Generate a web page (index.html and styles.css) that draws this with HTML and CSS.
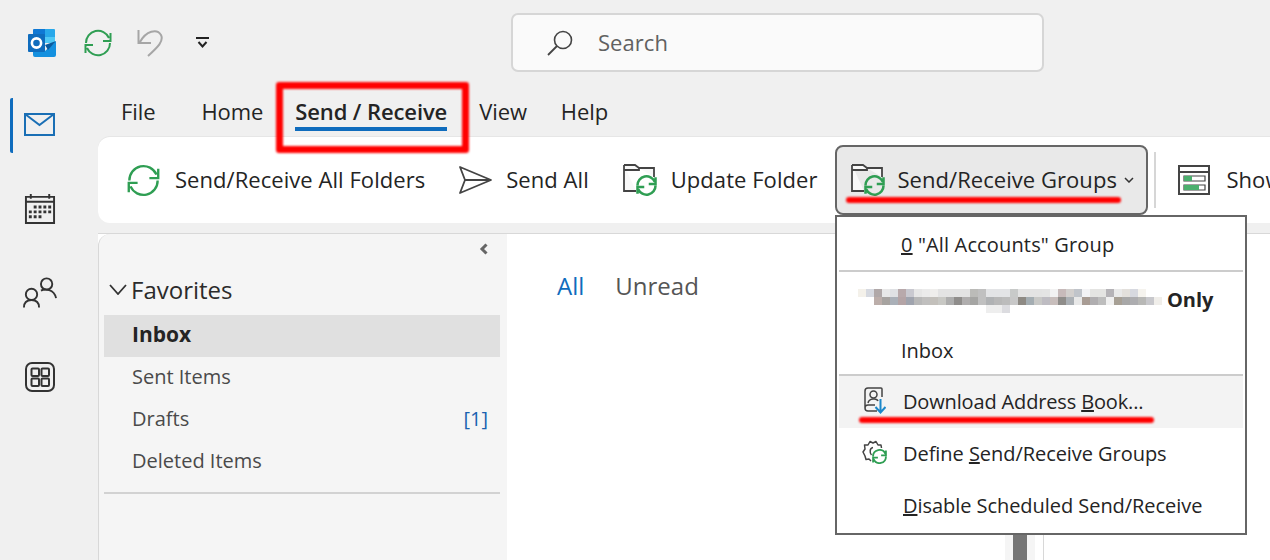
FILE: index.html
```html
<!DOCTYPE html>
<html lang="en">
<head>
  <meta charset="UTF-8" />
  <title>Outlook - Send / Receive</title>
  <link rel="stylesheet" href="styles.css">
</head>
<body>

  <svg class="defs" width="0" height="0">
    <symbol id="sync" viewBox="0 0 28 28">
      <path d="M2 14A12 12 0 0 1 25 9M26.500 4V12H19M26 14A12 12 0 0 1 3 19M1.500 24V16H9" fill="none" stroke="currentColor" stroke-width="2"/>
    </symbol>
    <symbol id="sync-bold" viewBox="0 0 28 28">
      <path d="M2 14A12 12 0 0 1 25 9M26 3V12H17M26 14A12 12 0 0 1 3 19M2 25V16H11" fill="none" stroke="currentColor" stroke-width="3.400"/>
    </symbol>
    <symbol id="folder" viewBox="0 0 32 28">
      <path d="M1 1H12L16 4V6H1V27H13M1 1V6M16 4H31V13" fill="#f8f8f8" stroke="currentColor" stroke-width="1.800"/>
    </symbol>
  </svg>

  <header class="titlebar">
    <div class="quick">
      <svg class="logo" width="28" height="28" viewBox="0 0 28 28">
        <path d="M6 0H17V8H5V1Q5 0 6 0Z" fill="#0f78d4"/>
        <path d="M17 0H26Q27 0 27 1V8H17Z" fill="#28a8ea"/>
        <path d="M5 8H17V16H5Z" fill="#0c6bbd"/>
        <path d="M17 8H27V14H17Z" fill="#50c8f5"/>
        <path d="M5 16L17 22L28 12V26Q28 28 26 28H7Q5 28 5 26Z" fill="#1490df"/>
        <path d="M17 16L28 12L20 21Z" fill="#0a5a9e"/>
        <rect x="0" y="5" width="17" height="18" rx="1" fill="#0f6cbd"/>
        <circle cx="8.500" cy="14" r="4.600" fill="none" stroke="#fff" stroke-width="2.600"/>
      </svg>
      <svg class="qa-sync"><use href="#sync"/></svg>
      <svg class="qa-undo" width="28" height="28" viewBox="0 0 28 28">
        <path d="M1.500 1V14H14M3 13C9 2 20 -1 24 6C27 12 21 18 11 27" fill="none" stroke="#a6a6a6" stroke-width="2"/>
      </svg>
      <svg class="qa-more" width="16" height="12" viewBox="0 0 16 12">
        <path d="M1 1H14M3.500 5L7.500 9.500L11.500 5" fill="none" stroke="#222" stroke-width="2"/>
      </svg>
    </div>
    <div class="search">
      <svg width="28" height="28" viewBox="0 0 28 28">
        <circle cx="16" cy="11" r="8.500" fill="none" stroke="#444" stroke-width="1.600"/>
        <path d="M10 17L1 26" fill="none" stroke="#444" stroke-width="1.800"/>
      </svg>
      <span>Search</span>
    </div>
  </header>

  <div class="app">
    <nav class="rail">
      <div class="rail-item active">
        <svg width="31" height="23" viewBox="0 0 31 23">
          <path d="M1 1H30V22H1ZM1 1L15.500 12L30 1" fill="none" stroke="#1a6fb5" stroke-width="2"/>
        </svg>
      </div>
      <div class="rail-item">
        <svg width="32" height="32" viewBox="0 0 33 33">
          <path d="M2 4H31V31H2ZM2 9H31M7 1V6M26 1V6" fill="none" stroke="#333" stroke-width="2"/>
          <path d="M10 13h3v3h-3zM15 13h3v3h-3zM20 13h3v3h-3zM25 13h3v3h-3zM5 18h3v3H5zM10 18h3v3h-3zM15 18h3v3h-3zM20 18h3v3h-3zM25 18h3v3h-3zM5 23h3v3H5zM10 23h3v3h-3zM15 23h3v3h-3z" fill="#333"/>
        </svg>
      </div>
      <div class="rail-item">
        <svg width="34" height="33" viewBox="0 0 36 34">
          <circle cx="9" cy="19" r="6" fill="none" stroke="#333" stroke-width="2"/>
          <path d="M1 33C1 28 4 25 9 25C14 25 17 28 17 33" fill="none" stroke="#333" stroke-width="2"/>
          <circle cx="25" cy="8" r="6" fill="none" stroke="#333" stroke-width="2"/>
          <path d="M19 15C23 13 33 13 35 23" fill="none" stroke="#333" stroke-width="2"/>
        </svg>
      </div>
      <div class="rail-item">
        <svg width="30" height="30" viewBox="0 0 30 30">
          <rect x="1" y="1" width="28" height="28" rx="6" fill="none" stroke="#333" stroke-width="2"/>
          <rect x="6.500" y="6.500" width="7.500" height="7.500" rx="1" fill="none" stroke="#333" stroke-width="2"/>
          <rect x="16.500" y="6.500" width="7.500" height="7.500" rx="1" fill="none" stroke="#333" stroke-width="2"/>
          <rect x="6.500" y="16.500" width="7.500" height="7.500" rx="1" fill="none" stroke="#333" stroke-width="2"/>
          <rect x="16.500" y="16.500" width="7.500" height="7.500" rx="1" fill="none" stroke="#333" stroke-width="2"/>
        </svg>
      </div>
    </nav>

    <main class="main">
      <div class="tabs">
        <span class="tab tab-file">File</span>
        <span class="tab">Home</span>
        <span class="tab active">Send / Receive</span>
        <span class="tab tab-view">View</span>
        <span class="tab">Help</span>
      </div>

      <div class="ribbon">
        <div class="rb-btn rb-all">
          <svg class="rb-sync"><use href="#sync"/></svg>
          <span>Send/Receive All Folders</span>
        </div>
        <div class="rb-btn rb-send">
          <svg width="33" height="28" viewBox="0 0 33 28">
            <path d="M1 1L32 14L1 27L6 14ZM6 14H32" fill="none" stroke="#444" stroke-width="1.800" stroke-linejoin="round"/>
          </svg>
          <span>Send All</span>
        </div>
        <div class="rb-btn rb-update">
          <span class="folder-icon">
            <svg class="folder-base"><use href="#folder"/></svg>
            <svg class="folder-sync"><use href="#sync-bold"/></svg>
          </span>
          <span>Update Folder</span>
        </div>
        <div class="rb-btn rb-groups">
          <span class="folder-icon">
            <svg class="folder-base"><use href="#folder"/></svg>
            <svg class="folder-sync"><use href="#sync-bold"/></svg>
          </span>
          <span>Send/Receive Groups</span>
          <svg class="caret" width="10" height="6" viewBox="0 0 10 6">
            <path d="M1 1L5 5L9 1" fill="none" stroke="#333" stroke-width="1.500"/>
          </svg>
        </div>
        <div class="rb-sep"></div>
        <div class="rb-btn rb-show">
          <svg width="32" height="30" viewBox="0 0 32 30">
            <path d="M1 1H31V29H1ZM1 7H31" fill="none" stroke="#444" stroke-width="2"/>
            <path d="M6 11H27V16H6ZM6 20H27V25H6Z" fill="#fff" stroke="#444" stroke-width="1.200"/>
            <path d="M6 11H14V16H6ZM6 20H21V25H6Z" fill="#4caf6e"/>
          </svg>
          <span>Show</span>
        </div>
      </div>

      <div class="content">
        <aside class="folders">
          <div class="collapse">
            <svg width="10" height="12" viewBox="0 0 10 12"><path d="M7.500 1.500L3 6L7.500 10.500" fill="none" stroke="#666" stroke-width="3"/></svg>
          </div>
          <div class="fav-head">
            <svg width="18" height="11" viewBox="0 0 18 11"><path d="M1 1L9 10L17 1" fill="none" stroke="#333" stroke-width="1.800"/></svg>
            <span>Favorites</span>
          </div>
          <ul class="fav-list">
            <li class="selected"><span>Inbox</span></li>
            <li><span>Sent Items</span></li>
            <li><span>Drafts</span> <span class="count">[1]</span></li>
            <li><span>Deleted Items</span></li>
          </ul>
          <div class="fav-rule"></div>
        </aside>
        <section class="list">
          <div class="list-body">
            <div class="filters">
              <span class="filter-on">All</span>
              <span>Unread</span>
            </div>
          </div>
          <div class="scroll"><div class="thumb"></div></div>
        </section>
        <section class="reading"></section>
      </div>
    </main>
  </div>

  <!-- dropdown from Send/Receive Groups -->
  <div class="menu">
    <div class="menu-row first"><span><u>0</u> "All Accounts" Group</span></div>
    <div class="menu-rule"></div>
    <div class="menu-group">
      <div class="menu-row account">
        <svg class="blurred" width="312" height="24" viewBox="0 0 312 24" shape-rendering="crispEdges">
          <rect x="0" width="8" height="8" fill="#f4f1ea"/><rect x="8" width="8" height="8" fill="#d6d9e0"/><rect x="16" width="8" height="8" fill="#b0a8a8"/><rect x="24" width="8" height="8" fill="#e8e8e8"/><rect x="32" width="8" height="8" fill="#dfe1e4"/><rect x="40" width="8" height="8" fill="#b8a9ab"/><rect x="48" width="8" height="8" fill="#c9c9d0"/><rect x="56" width="8" height="8" fill="#e6e6e6"/><rect x="64" width="8" height="8" fill="#ebebeb"/><rect x="72" width="8" height="8" fill="#efeeec"/><rect x="80" width="32" height="8" fill="#e3e3e3"/><rect x="112" width="8" height="8" fill="#bbbbb8"/><rect x="120" width="8" height="8" fill="#c0c0c0"/><rect x="128" width="24" height="8" fill="#e3e4e6"/><rect x="152" width="8" height="8" fill="#c8cac9"/><rect x="160" width="24" height="8" fill="#e3e3e3"/><rect x="184" width="8" height="8" fill="#e4e4e4"/><rect x="192" width="8" height="8" fill="#f2f2f2"/><rect x="200" width="8" height="8" fill="#c7baba"/><rect x="208" width="8" height="8" fill="#d2cfcd"/><rect x="216" width="8" height="8" fill="#c0c4ca"/><rect x="224" width="8" height="8" fill="#f3f3f5"/><rect x="232" width="16" height="8" fill="#e4e4e2"/><rect x="248" width="8" height="8" fill="#b5b3b7"/><rect x="256" width="8" height="8" fill="#e9e9e9"/><rect x="264" width="8" height="8" fill="#e3e0dc"/><rect x="272" width="8" height="8" fill="#d7d9e0"/><rect x="280" width="8" height="8" fill="#f5f3ee"/>
          <rect x="16" y="8" width="8" height="8" fill="#bcaeaa"/><rect x="24" y="8" width="8" height="8" fill="#a7a3a0"/><rect x="32" y="8" width="8" height="8" fill="#aab0b8"/><rect x="40" y="8" width="8" height="8" fill="#b4a4a6"/><rect x="48" y="8" width="8" height="8" fill="#a0a4ae"/><rect x="56" y="8" width="8" height="8" fill="#b8b8b8"/><rect x="64" y="8" width="8" height="8" fill="#c0bfbe"/><rect x="72" y="8" width="8" height="8" fill="#c3c0bb"/><rect x="80" y="8" width="8" height="8" fill="#c8c8c4"/><rect x="88" y="8" width="8" height="8" fill="#adadad"/><rect x="96" y="8" width="8" height="8" fill="#8f8d8b"/><rect x="104" y="8" width="8" height="8" fill="#b0aeae"/><rect x="112" y="8" width="8" height="8" fill="#a5a5a3"/><rect x="120" y="8" width="8" height="8" fill="#c0c0c0"/><rect x="128" y="8" width="8" height="8" fill="#b0b2b4"/><rect x="136" y="8" width="8" height="8" fill="#b8b8b8"/><rect x="144" y="8" width="8" height="8" fill="#bcbcbc"/><rect x="152" y="8" width="8" height="8" fill="#c8c8c8"/><rect x="160" y="8" width="8" height="8" fill="#8e8a84"/><rect x="168" y="8" width="8" height="8" fill="#a4adb2"/><rect x="176" y="8" width="8" height="8" fill="#c8c8c6"/><rect x="184" y="8" width="8" height="8" fill="#bebcc2"/><rect x="192" y="8" width="8" height="8" fill="#c8bebc"/><rect x="200" y="8" width="8" height="8" fill="#8f8d8a"/><rect x="208" y="8" width="8" height="8" fill="#abb0b5"/><rect x="216" y="8" width="8" height="8" fill="#e8e8e8"/><rect x="224" y="8" width="8" height="8" fill="#a89c94"/><rect x="232" y="8" width="8" height="8" fill="#b0aeb0"/><rect x="240" y="8" width="8" height="8" fill="#bdbdbd"/><rect x="248" y="8" width="8" height="8" fill="#f0f0f0"/><rect x="256" y="8" width="8" height="8" fill="#a7a095"/><rect x="264" y="8" width="8" height="8" fill="#a8a8a8"/><rect x="272" y="8" width="8" height="8" fill="#adadb0"/><rect x="280" y="8" width="8" height="8" fill="#b8b8b6"/><rect x="288" y="8" width="8" height="8" fill="#c8c8cc"/><rect x="296" y="8" width="8" height="8" fill="#f0eeea"/>
          <rect x="128" y="16" width="16" height="8" fill="#eeeeee"/><rect x="144" y="16" width="8" height="8" fill="#dcdce0"/>
        </svg>
        <b>Only</b>
      </div>
      <div class="menu-row inbox"><span>Inbox</span></div>
    </div>
    <div class="menu-rule"></div>
    <div class="menu-row with-icon hover">
      <svg class="menu-icon" width="22" height="27" viewBox="0 0 22 27">
        <path d="M13 24H4Q1 24 1 21V4Q1 1 4 1H17Q18 1 18 2V10M1 21Q1 18 4 18H11" fill="none" stroke="#444" stroke-width="1.500"/>
        <circle cx="9.500" cy="7.500" r="3.500" fill="none" stroke="#444" stroke-width="1.500"/>
        <path d="M4 16C5 11 13 11 14 14" fill="none" stroke="#444" stroke-width="1.500"/>
        <path d="M16.500 12V25M11.500 20L16.500 25.500L21.500 20" fill="none" stroke="#1b87c9" stroke-width="2"/>
      </svg>
      <span>Download Address <u>B</u>ook...</span>
    </div>
    <div class="menu-row with-icon">
      <svg class="menu-icon gear" width="25" height="24" viewBox="0 0 25 24">
        <path d="M9 21L7 19L4 19.500L3 16L1 12L3 9L2.500 5L6 5L8 1.500L11 3L14 1.500L16 5L19 5L19.500 8M9.500 15C7.500 13 7.500 8 11 7.500" fill="none" stroke="#444" stroke-width="1.500" stroke-linejoin="round"/>
        <svg class="gear-sync" x="10" y="9" width="15" height="15"><use href="#sync-bold"/></svg>
      </svg>
      <span>Define <u>S</u>end/Receive Groups</span>
    </div>
    <div class="menu-row with-icon"><span><u>D</u>isable Scheduled Send/Receive</span></div>
  </div>

  <!-- red marks drawn over the screenshot -->
  <div class="mark mark-box"></div>
  <div class="mark mark-line mark-groups"></div>
  <div class="mark mark-line mark-book"></div>

</body>
</html>
```

FILE: styles.css
```css
* {
  box-sizing: border-box;
}

html, body {
  margin: 0;
  padding: 0;
  height: 560px;
  overflow: hidden;
}

body {
  position: relative;
  background: #f0f0f0;
  color: #242424;
  font-family: 'Open Sans', 'Noto Sans', sans-serif;
  font-size: 22px;
  letter-spacing: 0.05px;
}

.defs {
  position: absolute;
}

/* title bar */

.titlebar {
  display: flex;
  align-items: center;
  height: 86px;
}

.quick {
  display: flex;
  align-items: center;
  width: 511px;
  padding-left: 28px;
}

.qa-sync {
  width: 28px;
  height: 28px;
  margin-left: 28px;
  color: #2f9e53;
}

.qa-undo {
  margin-left: 25px;
}

.qa-more {
  margin-left: 30px;
}

.search {
  display: flex;
  align-items: center;
  width: 533px;
  height: 59px;
  margin-top: -1px;
  padding-left: 34px;
  background: #fafafa;
  border: 2px solid #d6d6d6;
  border-radius: 7px;
  color: #616161;
}

.search span {
  margin: 0 0 2px 23px;
}

/* left rail + main */

.app {
  display: flex;
  height: 474px;
}

.rail {
  display: flex;
  flex-direction: column;
  gap: 29px;
  flex: 0 0 98px;
  padding: 12px 0 0 10px;
}

.rail-item {
  display: flex;
  align-items: center;
  justify-content: center;
  width: 59px;
  height: 55px;
  padding-right: 3px;
  border-left: 3px solid transparent;
}

.rail-item svg {
  margin-bottom: 2px;
}

.rail-item.active {
  border-left-color: #0f6cbd;
  border-radius: 2px;
}

.main {
  flex: 1;
  min-width: 0;
  display: flex;
  flex-direction: column;
}

.tabs {
  display: flex;
  gap: 32px;
  height: 51px;
  padding: 9px 0 0 23px;
  letter-spacing: -0.1px;
}

.tab {
  height: 36px;
  line-height: 32px;
  white-space: nowrap;
}

.tab-file {
  margin-right: 14px;
}

.tab-view {
  margin-right: 2px;
}

.tab.active {
  font-weight: 600;
  border-bottom: 4px solid #0f6cbd;
}

/* ribbon */

.ribbon {
  display: flex;
  align-items: center;
  height: 86px;
  margin-right: -40px;
  padding-left: 29px;
  background: #fff;
  border-radius: 12px 0 0 12px;
  box-shadow: 0 -1px 0 #e6e6e6;
  white-space: nowrap;
}

.rb-btn {
  display: flex;
  align-items: center;
  flex-shrink: 0;
}

.rb-btn > span:last-of-type {
  padding-bottom: 2px;
}

.rb-sync {
  width: 33px;
  height: 33px;
  color: #2f9e53;
}

.rb-all span {
  margin-left: 15px;
}

.rb-send {
  margin-left: 34px;
}

.rb-send span {
  margin-left: 14px;
}

.rb-update {
  margin-left: 34px;
}

.folder-icon {
  position: relative;
  flex-shrink: 0;
  width: 35px;
  height: 32px;
}

.folder-base {
  width: 32px;
  height: 28px;
  color: #444;
}

.folder-sync {
  position: absolute;
  left: 13px;
  top: 11px;
  width: 21px;
  height: 21px;
  color: #2f9e53;
}

.rb-update .folder-icon + span {
  margin-left: 13px;
}

.rb-groups {
  width: 313px;
  height: 70px;
  margin-left: 18px;
  padding: 0 0 0 14px;
  background: #e9e9e9;
  border: 2px solid #666;
  border-radius: 8px;
}

.rb-groups .folder-icon + span {
  margin-left: 11px;
}

.caret {
  margin-left: 7px;
}

.rb-sep {
  flex-shrink: 0;
  width: 2px;
  height: 56px;
  margin-left: 6px;
  background: #d6d6d6;
}

.rb-show {
  margin-left: 22px;
}

.rb-show span {
  margin-left: 16px;
}

/* folders / list */

.content {
  flex: 1;
  display: flex;
  min-height: 0;
  margin-top: 10px;
  margin-right: -1px;
  border-top: 1px solid #d8d8d8;
  background: #fff;
}

.folders {
  flex: 0 0 409px;
  padding: 0 7px 0 5px;
  background: #f5f5f5;
  border-left: 1px solid #d8d8d8;
  border-top-left-radius: 12px;
  font-size: 20px;
  letter-spacing: 0;
}

.collapse {
  display: flex;
  justify-content: flex-end;
  height: 32px;
  padding: 9px 11px 0 0;
}

.fav-head {
  display: flex;
  align-items: center;
  gap: 4px;
  height: 49px;
  padding: 0 0 3px 5px;
  font-size: 24px;
  color: #2b2b2b;
}

.fav-list {
  list-style: none;
  margin: 0;
  padding: 0;
  color: #4a4a4a;
}

.fav-list li {
  display: flex;
  justify-content: space-between;
  align-items: center;
  height: 42px;
  padding: 0 12px 4px 28px;
}

.fav-list li.selected {
  background: #e0e0e0;
  color: #242424;
  font-size: 21px;
  font-weight: 700;
}

.count {
  color: #1a62b0;
}

.fav-rule {
  height: 2px;
  margin-top: 9px;
  background: #d2d2d2;
}

.list {
  flex: 0 0 537px;
  display: flex;
  border-right: 1px solid #d8d8d8;
}

.list-body {
  flex: 1;
  padding: 35px 0 0 50px;
}

.filters {
  display: flex;
  gap: 31px;
  font-size: 24px;
  letter-spacing: 0;
  color: #555;
}

.filter-on {
  color: #0f6cbd;
}

.scroll {
  flex: 0 0 30px;
  margin-right: 8px;
  padding-left: 8px;
  background: #f5f5f5;
}

.thumb {
  width: 14px;
  height: 70px;
  margin-top: 270px;
  background: #767676;
}

.reading {
  flex: 1;
}

/* dropdown */

.menu {
  position: absolute;
  left: 835px;
  top: 215px;
  width: 412px;
  height: 320px;
  padding: 2px 0 1px;
  background: #fff;
  border: 2px solid #666;
  color: #242424;
  font-size: 20px;
  letter-spacing: -0.05px;
}

.menu-row {
  display: flex;
  align-items: center;
  height: 52px;
  padding: 0 0 2px 64px;
  white-space: nowrap;
}

.menu-row.first {
  height: 51px;
  padding-bottom: 0;
  letter-spacing: 0.15px;
}

.menu-rule {
  height: 2px;
  margin: 0 2px;
  background: #cccccc;
}

.menu-group {
  padding-top: 2px;
}

.menu-group .menu-row {
  height: 50px;
}

.menu-row.account {
  padding: 0 0 0 21px;
}

.menu-row.inbox {
  padding: 2px 0 0 64px;
}

.blurred {
  flex-shrink: 0;
  margin: 4px -3px 0 0;
}

.with-icon {
  position: relative;
  padding-left: 66px;
}

.hover {
  margin: 0 2px;
  padding-left: 64px;
  background: #f3f3f3;
  letter-spacing: -0.15px;
}

.menu-icon {
  position: absolute;
  left: 25px;
  top: 11px;
}

.gear {
  top: 12px;
}

.gear-sync {
  color: #2f9e53;
}

/* red annotations */

.mark {
  position: absolute;
  filter: blur(0.8px);
}

.mark-box {
  left: 276px;
  top: 82px;
  width: 193px;
  height: 71px;
  border: 7px solid #f00;
  border-radius: 3px;
}

.mark-line {
  height: 6px;
  background: #f00;
  border-radius: 3px;
}

.mark-groups {
  left: 846px;
  top: 197px;
  width: 275px;
}

.mark-book {
  left: 859px;
  top: 417px;
  width: 295px;
}
```
